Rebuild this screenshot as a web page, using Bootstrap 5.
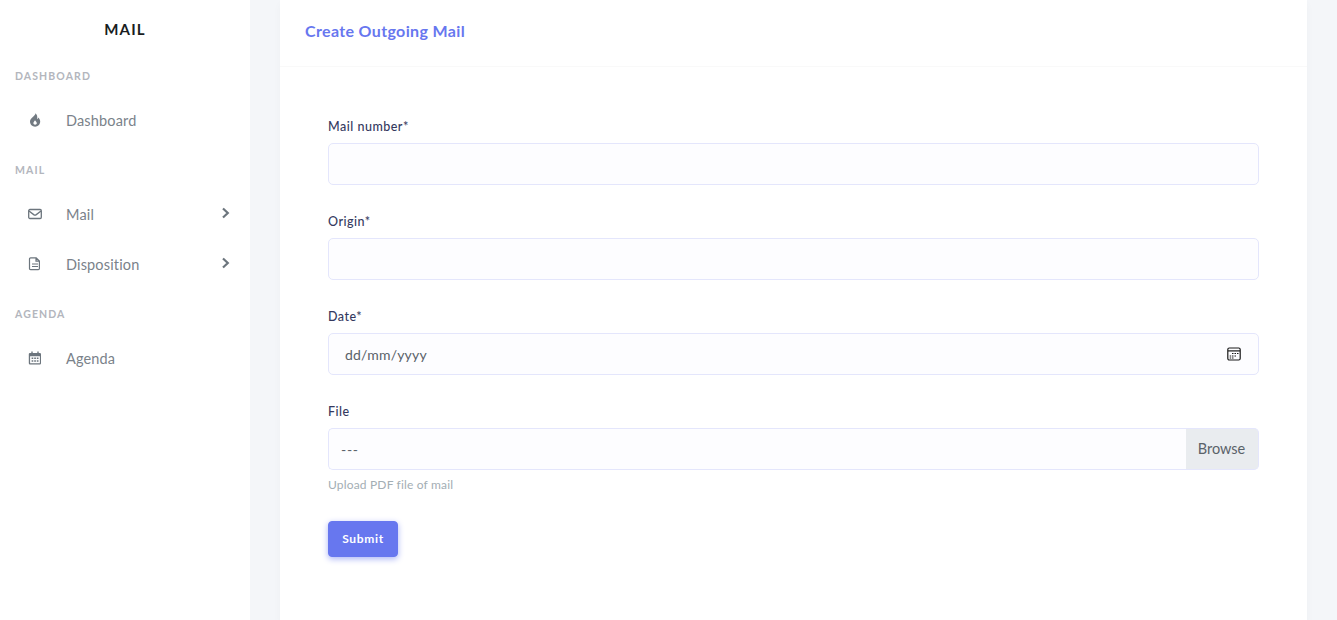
<!DOCTYPE html>
<html lang="en">
<head>
<meta charset="utf-8">
<title>Create Outgoing Mail</title>
<link href="https://cdn.jsdelivr.net/npm/bootstrap@5.3.0/dist/css/bootstrap.min.css" rel="stylesheet">
<style>
html,body{height:620px;overflow:hidden}
body{background:#f4f6f9;font-family:"Lato","Noto Sans",sans-serif;color:#6c757d}
.app-shell{height:620px}
.side-panel{width:250px;flex:none;background:#fff}
.brand-line{height:60px;line-height:58px;font-size:15px;font-weight:700;letter-spacing:1.2px;color:#191d21;text-align:center}
.menu-head{height:44px;padding:16px 15px 0;line-height:18px;font-size:10.5px;font-weight:700;letter-spacing:1.1px;color:#b3b6bd;text-transform:uppercase}
.menu-head.first{height:35px;padding-top:7px}
.menu-link{height:50px;display:flex;align-items:center;padding-left:28px;padding-right:20px;padding-top:1px;color:#7a828a;font-size:14.5px;letter-spacing:.15px;text-decoration:none}
.menu-link .ico{width:14px;height:14px;flex:none;margin-right:24px;margin-top:-2px}
.menu-link .chev{width:9px;height:12px;margin-left:auto;margin-top:-3px}
.main-pane{flex:1;padding:0 30px;min-width:0}
.form-sheet{background:#fff;border:0;border-radius:0;height:620px;box-shadow:0 4px 8px rgba(0,0,0,.03)}
.sheet-head{height:67px;padding:0 25px;display:flex;align-items:center;border-bottom:1px solid #f9f9f9}
.sheet-head h4{margin:0;font-size:16px;font-weight:700;color:#6777ef;letter-spacing:.35px;padding-bottom:4px}
.sheet-body{padding:51px 48px 0}
.field-block{margin-bottom:28px}
.field-label{display:block;font-size:12.5px;font-weight:500;color:#34395e;letter-spacing:.5px;line-height:18px;margin-bottom:7px}
.sheet-body .form-control{height:42px;background:#fdfdff;border:1px solid #e4e6fc;border-radius:5px;font-size:14px;color:#5a6269;padding:10px 16px;box-shadow:none}
.faux-date{display:flex;align-items:center;justify-content:space-between;padding-right:17px!important;letter-spacing:.2px}
.faux-date svg{width:14px;height:14px;flex:none}
.upload-row .form-control{padding-left:12px;border-right:0;border-top-right-radius:0;border-bottom-right-radius:0;letter-spacing:.7px}
.upload-row .input-group-text{height:42px;background:#e9ecef;border:1px solid #e4e6fc;border-left:0;border-radius:0 5px 5px 0;font-size:14.5px;color:#5a6269;padding:0 11px;width:74px;justify-content:center}
.help-line{font-size:12px;color:#a3aeb4;letter-spacing:.17px;line-height:18px;margin-top:6px}
.send-btn{width:70px;height:36px;margin-top:27px;padding:0;background:#6777ef;border-color:#6777ef;border-radius:4px;font-size:12px;font-weight:700;letter-spacing:.65px;box-shadow:0 2px 6px #acb5f6}
</style>
</head>
<body>
<div class="app-shell d-flex">
  <aside class="side-panel">
    <div class="brand-line">MAIL</div>
    <div class="menu-head first">Dashboard</div>
    <a class="menu-link" href="#">
      <svg class="ico" viewBox="0 0 14 14"><path fill="#727a82" fill-rule="evenodd" d="M7.400.2C7.800 2.700 2 4.600 2 8.600 2 11.500 4.300 13.800 7.100 13.800 9.900 13.800 12.200 11.500 12.200 8.600 12.200 7 11.500 5.500 10.400 4.400 10.200 5.200 9.800 5.800 9.200 6.200 9.500 3.800 9.300 1.600 7.400.2zM7.100 11.800c-1 0-1.700-.7-1.700-1.700 0-1.100.9-1.600 1.600-2.900.8 1.200 1.800 1.800 1.800 2.900 0 1-.7 1.700-1.700 1.700z"/></svg>
      Dashboard
    </a>
    <div class="menu-head">Mail</div>
    <a class="menu-link" href="#">
      <svg class="ico" viewBox="0 0 14 14" fill="none" stroke="#6c757d" stroke-width="1.300"><rect x=".7" y="2.500" width="12.600" height="9" rx="1.200"/><path d="M1 4.100l4.700 3.500q1.300.9 2.600 0L13 4.100"/></svg>
      Mail
      <svg class="chev" viewBox="0 0 9 12" fill="none" stroke="#6c757d" stroke-width="2.200"><path d="M2 1.500L6.800 6 2 10.500"/></svg>
    </a>
    <a class="menu-link" href="#">
      <svg class="ico" viewBox="0 0 14 14" fill="none" stroke="#6c757d" stroke-width="1.200"><path d="M2.600 .8h5.600l3.200 3.200v7.500q0 1.100-1.100 1.100H2.600q-1.100 0-1.100-1.100V1.900q0-1.100 1.100-1.100zM8 1v3.200h3.300M4 7h6M4 9.500h6"/></svg>
      Disposition
      <svg class="chev" viewBox="0 0 9 12" fill="none" stroke="#6c757d" stroke-width="2.200"><path d="M2 1.500L6.800 6 2 10.500"/></svg>
    </a>
    <div class="menu-head">Agenda</div>
    <a class="menu-link" href="#">
      <svg class="ico" viewBox="0 0 14 14"><path fill="#6c757d" fill-rule="evenodd" d="M3.300.5h1.400v1.400h4.600V.5h1.400v1.400h1.100q1.200 0 1.200 1.200v9.200q0 1.200-1.200 1.200H2q-1.200 0-1.200-1.200V3.100q0-1.200 1.200-1.200h1.300zM2.100 5.200v7h9.800v-7zM3.600 6.500h1.700v1.500H3.600zM6.200 6.500h1.700v1.500H6.200zM8.800 6.500h1.700v1.500H8.800zM3.600 9.200h1.700v1.500H3.600zM6.200 9.200h1.700v1.500H6.200zM8.800 9.200h1.700v1.500H8.800z"/></svg>
      Agenda
    </a>
  </aside>
  <main class="main-pane">
    <div class="form-sheet">
      <div class="sheet-head"><h4>Create Outgoing Mail</h4></div>
      <form class="sheet-body">
        <div class="field-block">
          <label class="field-label">Mail number*</label>
          <input type="text" class="form-control">
        </div>
        <div class="field-block">
          <label class="field-label">Origin*</label>
          <input type="text" class="form-control">
        </div>
        <div class="field-block">
          <label class="field-label">Date*</label>
          <div class="form-control faux-date">
            <span>dd/mm/yyyy</span>
            <svg viewBox="0 0 14 14" fill="none" stroke="#1a1a1a"><rect x=".8" y="1" width="12.400" height="12" rx="1.500" stroke-width="1.200"/><path d="M1 3.900h12" stroke-width="1.200"/><path d="M5 6.500h1.500M7.500 6.500h1.500M10 6.500h1.500M2.700 9h1.500M5 9h1.500M7.500 9h1.500M2.700 11h1.500M5 11h1.500" stroke-width="1.200"/></svg>
          </div>
        </div>
        <div>
          <label class="field-label">File</label>
          <div class="input-group upload-row">
            <div class="form-control">---</div>
            <span class="input-group-text">Browse</span>
          </div>
          <div class="help-line">Upload PDF file of mail</div>
        </div>
        <button type="button" class="btn btn-primary send-btn">Submit</button>
      </form>
    </div>
  </main>
</div>
<script src="https://cdn.jsdelivr.net/npm/bootstrap@5.3.0/dist/js/bootstrap.bundle.min.js"></script>
</body>
</html>
